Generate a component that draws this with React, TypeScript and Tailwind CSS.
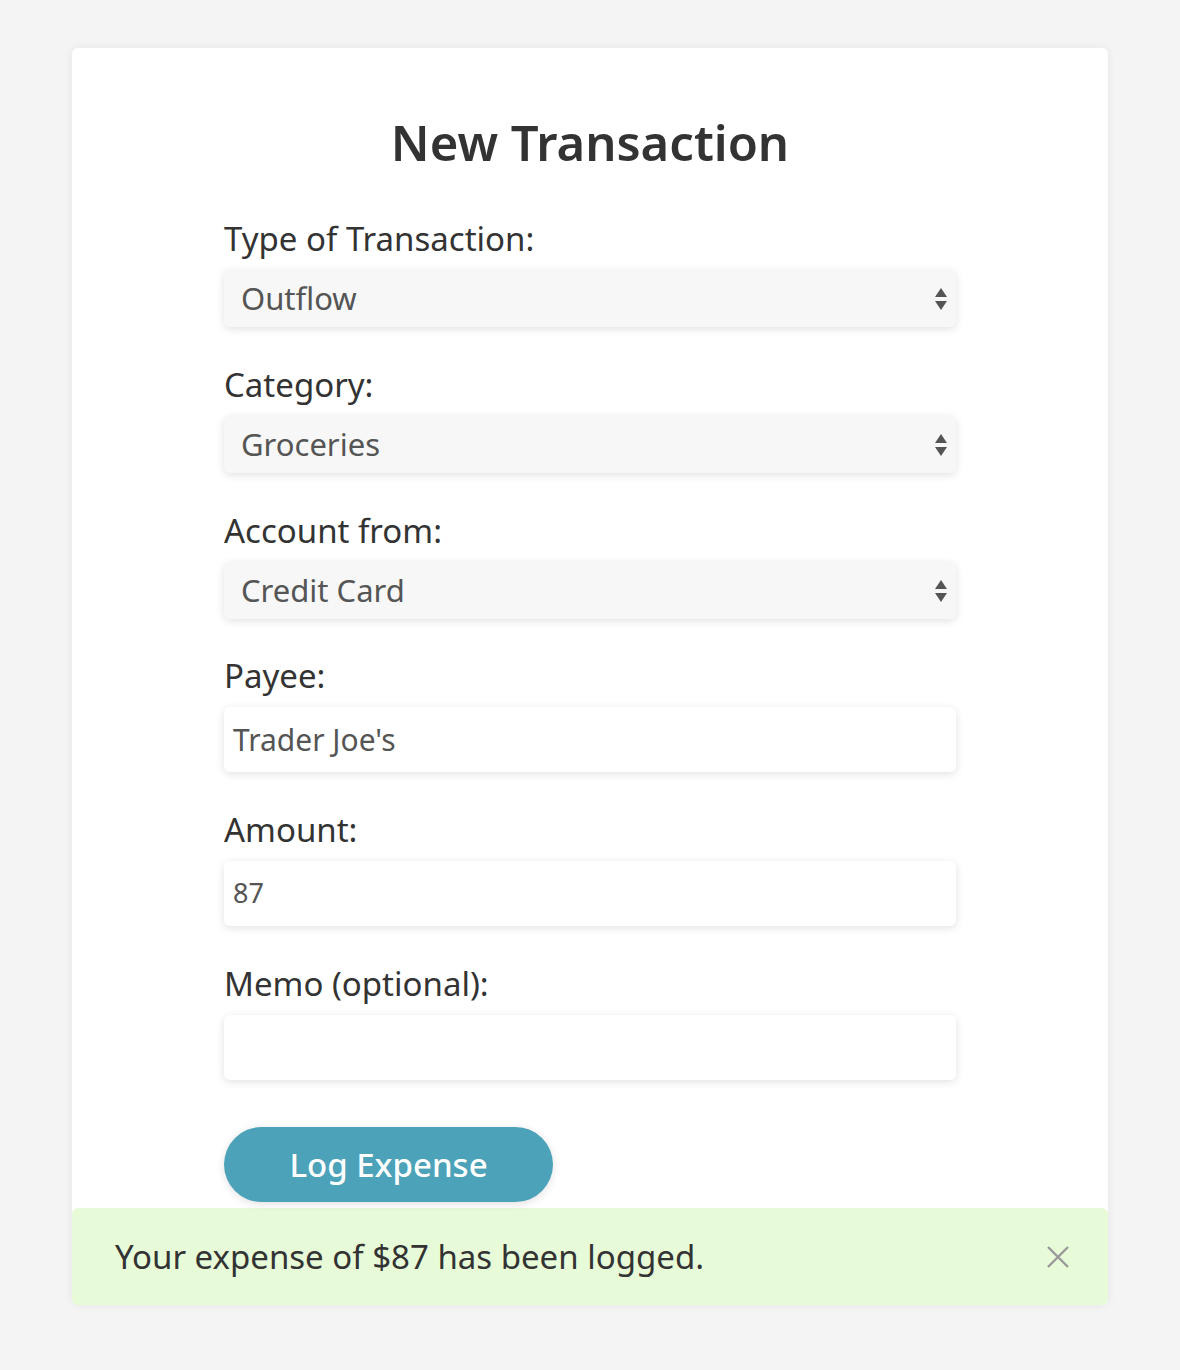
const font = { fontFamily: '"Noto Sans", "Open Sans", sans-serif' }

function SelectField({ label, value }: { label: string; value: string }) {
  return (
    <div className="flex flex-col">
      <label className="h-[46px] text-[33px] leading-[46px] text-[#333]">{label}</label>
      <div className="relative mt-[8px] flex h-[57px] items-center rounded-md bg-[#f7f7f7] pl-[17px] shadow-[0_2px_8px_rgba(0,0,0,0.12)]">
        <span className="text-[31px] text-[#555]">{value}</span>
        <svg className="absolute right-[8px] top-[17px]" width="14" height="24" viewBox="0 0 14 24">
          <path d="M7 1 L13 10 L1 10 Z" fill="#555" />
          <path d="M1 14 L13 14 L7 23 Z" fill="#555" />
        </svg>
      </div>
    </div>
  )
}

function TextField({ label, value, small }: { label: string; value: string; small?: boolean }) {
  return (
    <div className="flex flex-col">
      <label className="h-[46px] text-[33px] leading-[46px] text-[#333]">{label}</label>
      <div className="mt-[8px] flex h-[65px] items-center rounded-md bg-white pl-[9px] shadow-[0_2px_8px_rgba(0,0,0,0.12)]">
        <span className={small ? "text-[27px] text-[#555]" : "text-[30px] text-[#555]"}>{value}</span>
      </div>
    </div>
  )
}

export default function App() {
  return (
    <div className="min-h-[1370px] bg-[#f4f4f4] pt-[48px]" style={font}>
      <div className="mx-auto w-[1036px] rounded-md bg-white shadow-[0_0_10px_rgba(0,0,0,0.06)]">
        <div className="mx-auto w-[732px] pb-[6px]">
          <h1 className="pt-[62px] text-center text-[49px] font-semibold leading-[64px] text-[#333]">
            New Transaction
          </h1>
          <div className="mt-[42px] flex flex-col gap-[35px]">
            <SelectField label="Type of Transaction:" value="Outflow" />
            <SelectField label="Category:" value="Groceries" />
            <SelectField label="Account from:" value="Credit Card" />
          </div>
          <div className="mt-[34px] flex flex-col gap-[35px]">
            <TextField label="Payee:" value="Trader Joe's" />
            <TextField label="Amount:" value="87" small />
            <TextField label="Memo (optional):" value="" />
          </div>
          <button className="mt-[47px] h-[75px] w-[329px] rounded-full bg-[#4ba2b9] text-[33px] font-medium text-white shadow-[0_2px_8px_rgba(0,0,0,0.12)]">
            Log Expense
          </button>
        </div>
        <div className="flex h-[97px] items-center justify-between rounded-md bg-[#e8fbd8] pl-[43px] pr-[39px]">
          <span className="text-[33px] text-[#333]">Your expense of $87 has been logged.</span>
          <svg width="22" height="22" viewBox="0 0 22 22">
            <path d="M1 1 L21 21 M21 1 L1 21" stroke="#999" strokeWidth="2.4" />
          </svg>
        </div>
      </div>
    </div>
  )
}
